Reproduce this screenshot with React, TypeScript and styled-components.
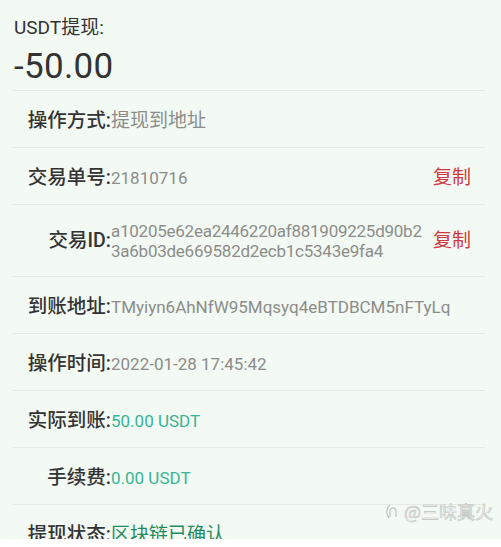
import React from "react";
import styled, { createGlobalStyle } from "styled-components";

const GlobalStyle = createGlobalStyle`
  html, body { margin: 0; padding: 0; background: #ffffff; }
  * { box-sizing: border-box; }
`;

const FONT = `Roboto, "Noto Sans CJK SC", "Noto Sans", sans-serif`;

const Page = styled.div`
  position: relative;
  height: 539px;
  overflow: hidden;
  background: #f3f9f3;
  padding: 0 16px 0 13px;
  font-family: ${FONT};
  color: #333333;
`;

const Header = styled.header`
  display: flex;
  flex-direction: column;
  gap: 7px;
  padding: 16px 0 3px 1px;
`;

const Title = styled.div`
  font-size: 19px;
  line-height: 24px;
  color: #333333;
`;

const Amount = styled.div`
  font-size: 35px;
  line-height: 40px;
  color: #333333;
  letter-spacing: 0.3px;
`;

const List = styled.div`
  display: flex;
  flex-direction: column;
`;

const Row = styled.div<{ $tall?: boolean }>`
  display: flex;
  align-items: center;
  min-height: ${(p) => (p.$tall ? 72 : 57)}px;
  padding: ${(p) => (p.$tall ? "0" : "3px")} 14px 0 14px;
  border-top: 1px solid #e3ebe3;
`;

const Label = styled.span`
  flex: 0 0 84px;
  text-align: right;
  font-size: 19.5px;
  font-weight: 500;
  line-height: 24px;
  color: #333333;
  white-space: nowrap;
`;

const Value = styled.div<{ $tone: "gray" | "teal" | "green"; $cjk?: boolean; $tight?: boolean }>`
  flex: 1;
  min-width: 0;
  font-size: ${(p) => (p.$cjk ? 19 : 17)}px;
  line-height: 20px;
  letter-spacing: ${(p) => (p.$tight ? "-0.25px" : "0")};
  color: ${(p) =>
    p.$tone === "teal" ? "#36b596" : p.$tone === "green" ? "#1f8c5e" : "#8b8d8b"};
  white-space: nowrap;
`;

const Line = styled.span`
  display: block;
`;

const Copy = styled.button`
  flex: none;
  border: 0;
  background: none;
  padding: 0;
  margin-left: 8px;
  font-family: ${FONT};
  font-size: 19px;
  line-height: 24px;
  color: #d0393f;
  cursor: pointer;
`;

const Watermark = styled.div`
  position: absolute;
  right: 8px;
  top: 500px;
  display: flex;
  align-items: center;
  gap: 3px;
  font-family: "Noto Sans CJK SC", sans-serif;
  font-size: 18px;
  line-height: 22px;
  color: #f7f7f7;
  -webkit-text-stroke: 0.6px #b9bcb9;
  opacity: 0.9;
`;

type Item = {
  label: string;
  value: string[];
  tone: "gray" | "teal" | "green";
  cjk?: boolean;
  copy?: boolean;
};

const items: Item[] = [
  { label: "操作方式:", value: ["提现到地址"], tone: "gray", cjk: true },
  { label: "交易单号:", value: ["21810716"], tone: "gray", copy: true },
  {
    label: "交易ID:",
    value: ["a10205e62ea2446220af881909225d90b2", "3a6b03de669582d2ecb1c5343e9fa4"],
    tone: "gray",
    copy: true,
  },
  { label: "到账地址:", value: ["TMyiyn6AhNfW95Mqsyq4eBTDBCM5nFTyLq"], tone: "gray" },
  { label: "操作时间:", value: ["2022-01-28 17:45:42"], tone: "gray" },
  { label: "实际到账:", value: ["50.00 USDT"], tone: "teal" },
  { label: "手续费:", value: ["0.00 USDT"], tone: "teal" },
  { label: "提现状态:", value: ["区块链已确认"], tone: "green", cjk: true },
];

export default function App() {
  return (
    <>
      <GlobalStyle />
      <Page>
        <Header>
          <Title>USDT提现:</Title>
          <Amount>-50.00</Amount>
        </Header>
        <List>
          {items.map((it) => {
            const tall = it.value.length > 1;
            return (
              <Row key={it.label} $tall={tall}>
                <Label>{it.label}</Label>
                <Value $tone={it.tone} $cjk={it.cjk} $tight={tall}>
                  {it.value.map((l) => (
                    <Line key={l}>{l}</Line>
                  ))}
                </Value>
                {it.copy && <Copy>复制</Copy>}
              </Row>
            );
          })}
        </List>
        <Watermark>
          <svg width="18" height="18" viewBox="0 0 18 18" fill="none" stroke="#b9bcb9" strokeWidth="1.2">
            <path d="M6 16 C3 13 3 6 7 3 M7 8 L7 15 M7 8 C9 5 13 5 13 9 L13 15" />
          </svg>
          <span>@三味真火</span>
        </Watermark>
      </Page>
    </>
  );
}
